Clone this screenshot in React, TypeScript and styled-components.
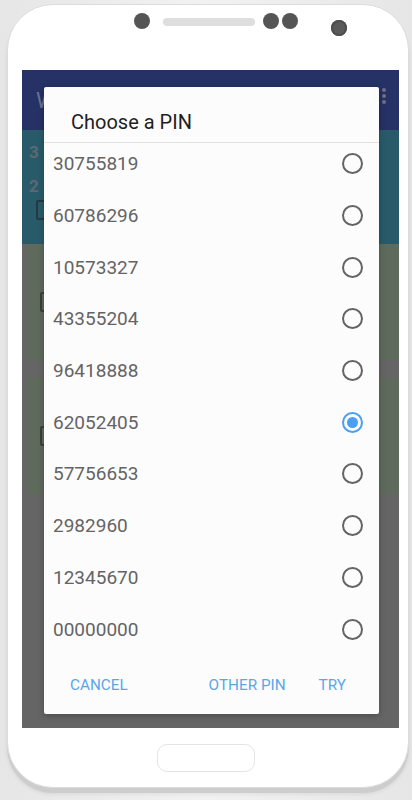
import styled, { createGlobalStyle } from "styled-components";

const pins = [
    "30755819",
    "60786296",
    "10573327",
    "43355204",
    "96418888",
    "62052405",
    "57756653",
    "2982960",
    "12345670",
    "00000000",
];

const selectedPin = "62052405";

export default function App() {
    return (
        <Page>
            <GlobalStl />
            <PhoneStl>
                <SensorsStl>
                    <DotStl />
                    <SpeakerStl />
                    <DotStl />
                    <DotStl />
                    <LensStl />
                </SensorsStl>
                <ScreenStl>
                    {/* app behind the dialog, already dimmed */}
                    <AppBarStl>
                        <AppTitleStl>W</AppTitleStl>
                        <MenuDotsStl>
                            <i />
                            <i />
                            <i />
                        </MenuDotsStl>
                    </AppBarStl>
                    <HeaderStl>
                        <HeaderLineStl>3</HeaderLineStl>
                        <HeaderLineStl>2</HeaderLineStl>
                        <BoxStl />
                    </HeaderStl>
                    <CardStl>
                        <BoxStl />
                    </CardStl>
                    <CardStl>
                        <BoxStl />
                    </CardStl>

                    <DialogStl>
                        <DialogTitleStl>Choose a PIN</DialogTitleStl>
                        <ListStl>
                            <ListInnerStl>
                                {pins.map((pin) => (
                                    <RowStl key={pin}>
                                        <PinStl>{pin}</PinStl>
                                        <RadioStl $checked={pin === selectedPin} />
                                    </RowStl>
                                ))}
                            </ListInnerStl>
                        </ListStl>
                        <ActionsStl>
                            <ActionStl>Cancel</ActionStl>
                            <SpacerStl />
                            <ActionStl>Other PIN</ActionStl>
                            <ActionStl>Try</ActionStl>
                        </ActionsStl>
                    </DialogStl>
                </ScreenStl>
                <BottomStl>
                    <HomeStl />
                </BottomStl>
            </PhoneStl>
        </Page>
    );
}

const GlobalStl = createGlobalStyle`
    body {
        margin: 0;
        background: #ececec;
        font-family: Roboto, "Noto Sans", sans-serif;
    }
`;

const Page = styled.div`
    width: 412px;
    height: 800px;
    overflow: hidden;
    background: linear-gradient(90deg, #e6e6e6, #f2f2f2 50%, #e6e6e6);
    padding: 4px 3px 0 7px;
    box-sizing: border-box;
`;

const PhoneStl = styled.div`
    width: 402px;
    height: 784px;
    background: #ffffff;
    border-radius: 46px;
    border: 1px solid #dcdcdc;
    box-sizing: border-box;
    box-shadow: 0 5px 0 #cdcdcd, 0 6px 4px rgba(0, 0, 0, 0.08);
    display: flex;
    flex-direction: column;
    padding: 0 9px 0 14px;
`;

const SensorsStl = styled.div`
    height: 65px;
    display: flex;
    align-items: flex-start;
    padding: 8px 0 0 112px;
    box-sizing: border-box;
`;

const DotStl = styled.span`
    width: 16px;
    height: 16px;
    border-radius: 50%;
    background: #555555;
    margin-right: 3px;
    &:first-child {
        margin-right: 13px;
    }
`;

const SpeakerStl = styled.span`
    width: 92px;
    height: 8px;
    margin: 5px 8px 0 0;
    border-radius: 4px;
    background: #dedede;
`;

const LensStl = styled.span`
    width: 16px;
    height: 16px;
    margin: 7px 0 0 30px;
    border-radius: 50%;
    background: #5a5a5a;
    box-shadow: inset 0 0 0 2px #4e4e4e;
`;

const ScreenStl = styled.div`
    position: relative;
    width: 377px;
    height: 658px;
    background: #656566;
    display: flex;
    flex-direction: column;
    overflow: hidden;
`;

const AppBarStl = styled.div`
    height: 60px;
    background: #263165;
    display: flex;
    align-items: center;
    justify-content: space-between;
    padding: 0 13px 0 14px;
    box-sizing: border-box;
`;

const AppTitleStl = styled.span`
    font-size: 22px;
    color: #6b7391;
`;

const MenuDotsStl = styled.span`
    display: flex;
    flex-direction: column;
    gap: 2px;
    margin-top: -8px;
    i {
        width: 4px;
        height: 4px;
        border-radius: 50%;
        background: #6d7188;
    }
`;

const HeaderStl = styled.div`
    height: 114px;
    background: #295a6a;
    padding: 12px 0 0 7px;
    box-sizing: border-box;
    display: flex;
    flex-direction: column;
`;

const HeaderLineStl = styled.span`
    font-size: 17px;
    font-weight: 700;
    color: #5b6a72;
    line-height: 20px;
    margin-bottom: 14px;
`;

const BoxStl = styled.span`
    width: 14px;
    height: 16px;
    border: 2px solid #243a3e;
    border-radius: 2px;
    margin-left: 7px;
    margin-top: -10px;
`;

const CardStl = styled.div`
    height: 116px;
    margin: 0 0 18px 5px;
    background: #5e6a5c;
    border-radius: 2px 0 0 2px;
    display: flex;
    align-items: center;
    ${BoxStl} {
        margin: 0 0 0 13px;
        border-color: #3b4039;
    }
`;

const DialogStl = styled.div`
    position: absolute;
    top: 17px;
    left: 22px;
    width: 335px;
    height: 627px;
    background: #fdfcfd;
    border-radius: 2px;
    display: flex;
    flex-direction: column;
    box-shadow: 0 2px 6px rgba(0, 0, 0, 0.25);
`;

const DialogTitleStl = styled.div`
    height: 56px;
    display: flex;
    align-items: flex-end;
    padding: 0 0 8px 27px;
    box-sizing: border-box;
    font-size: 20px;
    line-height: 24px;
    color: #1f1f1f;
    border-bottom: 1px solid #e2e2e2;
`;

const ListStl = styled.div`
    height: 511px;
    overflow: hidden;
`;

const ListInnerStl = styled.div`
    margin-top: -5px;
    display: flex;
    flex-direction: column;
`;

const RowStl = styled.div`
    height: 51.7px;
    display: flex;
    align-items: center;
    justify-content: space-between;
    padding: 0 16px 0 9px;
`;

const PinStl = styled.span`
    font-size: 19px;
    color: #646464;
`;

const RadioStl = styled.span<{ $checked: boolean }>`
    width: 21px;
    height: 21px;
    box-sizing: border-box;
    border-radius: 50%;
    border: 2px solid ${(p) => (p.$checked ? "#4aa0ee" : "#646464")};
    display: flex;
    align-items: center;
    justify-content: center;
    &::after {
        content: "";
        display: ${(p) => (p.$checked ? "block" : "none")};
        width: 11px;
        height: 11px;
        border-radius: 50%;
        background: #4aa0ee;
    }
`;

const ActionsStl = styled.div`
    flex: 1;
    display: flex;
    align-items: center;
    padding: 0 33px 0 26px;
    gap: 33px;
`;

const SpacerStl = styled.span`
    flex: 1;
    margin-right: -33px;
`;

const ActionStl = styled.span`
    font-size: 15.3px;
    font-weight: 400;
    text-transform: uppercase;
    color: #5ba6e8;
    margin-top: 1px;
`;

const BottomStl = styled.div`
    flex: 1;
    display: flex;
    justify-content: center;
    padding-top: 16px;
    padding-right: 9px;
`;

const HomeStl = styled.span`
    width: 98px;
    height: 28px;
    border: 1.5px solid #e4e4e4;
    border-radius: 10px;
    box-sizing: border-box;
`;
